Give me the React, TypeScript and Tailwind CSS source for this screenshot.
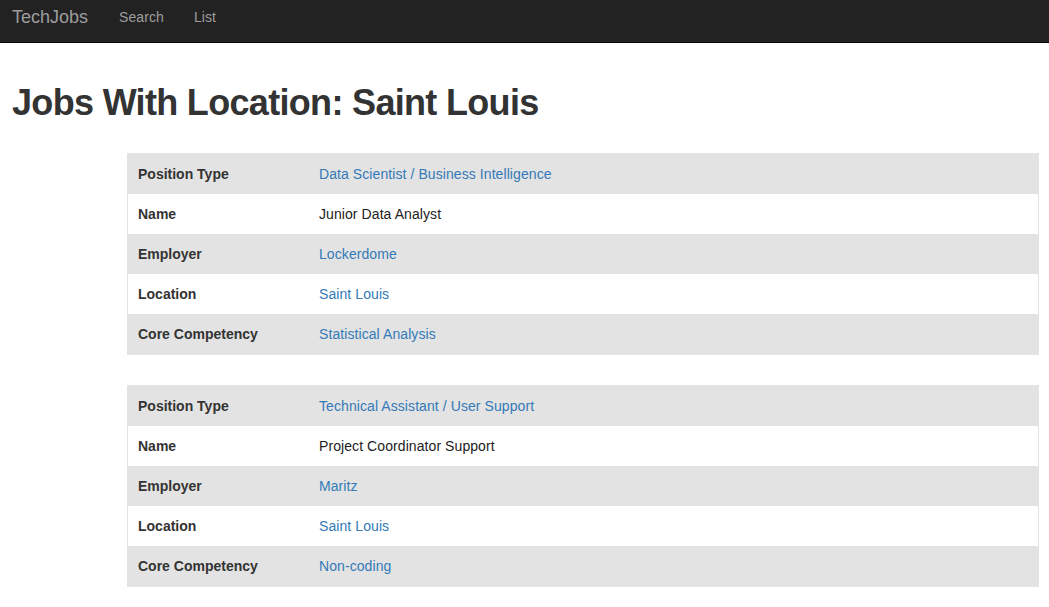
import React from "react";

type Row = { label: string; value: string; link: boolean };

const jobs: Row[][] = [
  [
    { label: "Position Type", value: "Data Scientist / Business Intelligence", link: true },
    { label: "Name", value: "Junior Data Analyst", link: false },
    { label: "Employer", value: "Lockerdome", link: true },
    { label: "Location", value: "Saint Louis", link: true },
    { label: "Core Competency", value: "Statistical Analysis", link: true },
  ],
  [
    { label: "Position Type", value: "Technical Assistant / User Support", link: true },
    { label: "Name", value: "Project Coordinator Support", link: false },
    { label: "Employer", value: "Maritz", link: true },
    { label: "Location", value: "Saint Louis", link: true },
    { label: "Core Competency", value: "Non-coding", link: true },
  ],
];

export default function App() {
  return (
    <div
      className="min-h-[607px] bg-white text-[#333] text-[14px]"
      style={{ fontFamily: '"Liberation Sans", Arial, Helvetica, sans-serif' }}
    >
      <nav className="h-[43px] bg-[#222] border-b border-[#080808] flex items-center">
        <a className="ml-[12px] text-[18px] text-[#9d9d9d] leading-[20px] -mt-[8px]">TechJobs</a>
        <a className="ml-[31px] text-[14px] text-[#9d9d9d] leading-[20px] -mt-[8px] tracking-[0.1px]">Search</a>
        <a className="ml-[30px] text-[14px] text-[#9d9d9d] leading-[20px] -mt-[8px]">List</a>
      </nav>
      <h1 className="mt-[40px] ml-[12px] text-[36px] leading-[40px] font-bold tracking-[-0.68px] text-[#333]">
        Jobs With Location: Saint Louis
      </h1>
      <div className="mt-[30px] flex flex-col gap-[30px]">
        {jobs.map((job, i) => (
          <div key={i} className="ml-[127px] w-[912px] border border-[#e3e3e3] bg-white">
            {job.map((r, j) => (
              <div
                key={j}
                className={
                  "flex h-[40px] items-center " + (j % 2 === 0 ? "bg-[#e3e3e3]" : "bg-white")
                }
              >
                <div className="w-[181px] pl-[10px] font-bold leading-[20px]">{r.label}</div>
                <div className="pl-[10px] leading-[20px] tracking-[0.08px]">
                  {r.link ? (
                    <a className="text-[#337ab7]">{r.value}</a>
                  ) : (
                    <span className="text-[#222]">{r.value}</span>
                  )}
                </div>
              </div>
            ))}
          </div>
        ))}
      </div>
    </div>
  );
}
